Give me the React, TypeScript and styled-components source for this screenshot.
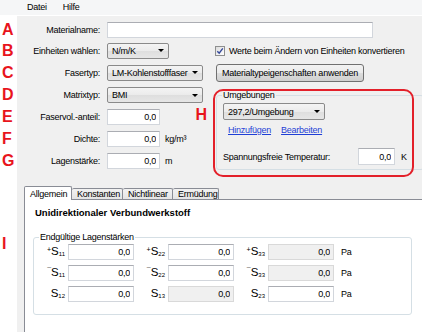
import React from "react"
import styled, { createGlobalStyle } from "styled-components"

const GlobalStyle = createGlobalStyle`
  html, body {
    margin: 0;
    padding: 0;
  }
  body {
    width: 422px;
    height: 332px;
    overflow: hidden;
    font-family: "Liberation Sans", Arial, sans-serif;
    font-size: 9px;
    letter-spacing: -0.25px;
    color: #000;
  }
`

const Window = styled.div`
  width: 422px;
  height: 332px;
  display: flex;
  flex-direction: column;
  overflow: hidden;
  background: linear-gradient(to right, #ffffff 0 17px, #f0f0f0 17px);
`

const MenuBar = styled.div`
  flex: none;
  height: 15px;
  display: flex;
  align-items: center;
  padding-left: 19px;
  background: #f5f6f7;
  border-bottom: 1px solid #ffffff;
`

const MenuItem = styled.span`
  padding: 0 8px;
  line-height: 15px;
`

const FormGrid = styled.div`
  flex: none;
  display: grid;
  grid-template-columns: 17px 83px 106px 1fr;
  grid-template-rows: 20px 21px 23px 22px 22px 22px 22px;
  padding-top: 4px;
`

const Marker = styled.div<{ $top?: number }>`
  padding-left: 2px;
  margin-top: ${(p) => p.$top ?? 0}px;
  align-self: ${(p) => (p.$top ? "start" : "center")};
  color: #e8141c;
  font-family: "Liberation Sans", Arial, sans-serif;
  font-weight: bold;
  font-size: 16px;
  line-height: 16px;
  letter-spacing: 0;
`

const Label = styled.div`
  align-self: center;
  text-align: right;
  white-space: nowrap;
`

const Field = styled.div<{ $span?: boolean }>`
  display: flex;
  align-items: center;
  padding-left: 7px;
  grid-column: ${(p) => (p.$span ? "3 / 5" : "auto")};
`

const Extra = styled.div<{ $indent: number }>`
  display: flex;
  align-items: center;
  padding-left: ${(p) => p.$indent}px;
`

const TextBox = styled.input<{ $w: number; $h?: number; $left?: boolean }>`
  box-sizing: border-box;
  width: ${(p) => p.$w}px;
  height: ${(p) => p.$h ?? 16}px;
  margin: 0;
  padding: 0 3px;
  border: 1px solid #d2d6dc;
  border-top-color: #abadb3;
  background: #ffffff;
  font: inherit;
  letter-spacing: inherit;
  color: #000;
  text-align: ${(p) => (p.$left ? "left" : "right")};
  outline: none;
  &:disabled {
    background: #f0f0f0;
    border-color: #d9d9d9;
    color: #000;
    -webkit-text-fill-color: #000;
  }
`

const Combo = styled.div<{ $w: number; $h?: number }>`
  box-sizing: border-box;
  width: ${(p) => p.$w}px;
  height: ${(p) => p.$h ?? 16}px;
  display: flex;
  align-items: center;
  padding-left: 4px;
  border: 1px solid #8a8a8a;
  border-radius: 2px;
  background: linear-gradient(#f4f4f4, #ebebeb 50%, #dedede 51%, #e6e6e6);
  white-space: nowrap;
`

const Arrow = styled.span`
  margin-left: auto;
  margin-right: 4px;
  width: 0;
  height: 0;
  border-left: 3px solid transparent;
  border-right: 3px solid transparent;
  border-top: 3px solid #000;
`

const PushButton = styled.div<{ $w: number }>`
  box-sizing: border-box;
  width: ${(p) => p.$w}px;
  height: 18px;
  display: flex;
  align-items: center;
  justify-content: center;
  border: 1px solid #707070;
  border-radius: 3px;
  background: linear-gradient(#f2f2f2, #ebebeb 50%, #dddddd 51%, #cfcfcf);
  white-space: nowrap;
`

const CheckRow = styled.label`
  display: flex;
  align-items: center;
  gap: 4px;
  white-space: nowrap;
`

const CheckBox = styled.span`
  box-sizing: border-box;
  width: 10px;
  height: 10px;
  display: flex;
  border: 1px solid #8e8f8f;
  background: linear-gradient(135deg, #dcdcdc, #ffffff);
`

const Unit = styled.span`
  margin-left: 5px;
  white-space: nowrap;
`

const HMarker = styled(Marker)`
  margin-left: auto;
  margin-right: -1px;
  margin-top: -4px;
  padding-left: 0;
`

const GroupBox = styled.div`
  position: relative;
  box-sizing: border-box;
  border: 1px solid #d5dfe5;
  border-radius: 3px;
`

const GroupTitle = styled.span<{ $bg: string }>`
  position: absolute;
  top: -6px;
  left: 5px;
  padding: 0 1px;
  line-height: 11px;
  background: ${(p) => p.$bg};
  white-space: nowrap;
`

const EnvBox = styled(GroupBox)`
  grid-column: 4;
  grid-row: 4 / span 4;
  margin: 11px -2px 2px 10px;
  padding: 7px 6px 4px 6px;
  display: flex;
  flex-direction: column;
`

const Highlight = styled.div`
  position: absolute;
  top: -7px;
  left: -4px;
  right: 9px;
  bottom: -8px;
  border: 2px solid #e3202a;
  border-radius: 10px;
  pointer-events: none;
`

const LinkRow = styled.div`
  display: flex;
  gap: 10px;
  height: 10px;
  margin-top: 5px;
  padding-left: 5px;
  align-items: center;
`

const Link = styled.a`
  color: #1f3fd6;
  text-decoration: underline;
  cursor: pointer;
`

const TempRow = styled.div`
  display: grid;
  grid-template-columns: 135px 37px auto;
  align-items: center;
  margin-top: 13px;
  height: 17px;
`

const TempUnit = styled.span`
  margin-left: 6px;
`

const TabArea = styled.div`
  flex: 1;
  min-height: 0;
  display: grid;
  grid-template-columns: 24px 1fr;
  padding-top: 14px;
`

const Gutter = styled.div`
  display: flex;
  flex-direction: column;
`

const TabColumn = styled.div`
  display: flex;
  flex-direction: column;
  min-height: 0;
`

const TabStrip = styled.div`
  flex: none;
  height: 13px;
  display: flex;
  align-items: flex-end;
`

const Tab = styled.div<{ $w: number; $active?: boolean }>`
  box-sizing: border-box;
  width: ${(p) => p.$w}px;
  height: ${(p) => (p.$active ? 14 : 11)}px;
  margin-bottom: ${(p) => (p.$active ? -1 : 0)}px;
  padding-left: 5px;
  display: flex;
  align-items: center;
  border: 1px solid #898c95;
  border-bottom: none;
  border-left-width: ${(p) => (p.$active ? 1 : 0)}px;
  border-radius: 2px 2px 0 0;
  background: ${(p) => (p.$active ? "#ffffff" : "linear-gradient(#f2f2f2, #e4e4e4)")};
  position: relative;
  z-index: ${(p) => (p.$active ? 1 : 0)};
  white-space: nowrap;
`

const Panel = styled.div`
  flex: 1;
  background: #ffffff;
  border-top: 1px solid #898c95;
  border-left: 1px solid #898c95;
`

const PanelTitle = styled.div`
  margin: 8px 0 0 10px;
  font-weight: bold;
  font-size: 9.5px;
  letter-spacing: 0;
  line-height: 10px;
`

const StressBox = styled(GroupBox)`
  width: 379px;
  margin: 19px 0 0 8px;
  padding: 6px 0 12px 2px;
  display: grid;
  grid-template-columns: 32px 66px 34px 66px 34px 66px auto;
  grid-template-rows: repeat(3, 16px);
  row-gap: 5px;
  align-items: center;
`

const Sym = styled.span`
  text-align: right;
  padding-right: 3px;
  font-size: 11.5px;
  line-height: 16px;
  letter-spacing: 0;
  white-space: nowrap;
`

const Pre = styled.span`
  font-size: 7px;
  vertical-align: 3px;
`

const Idx = styled.span`
  font-size: 6px;
  vertical-align: -1px;
`

const Pa = styled.span`
  padding-left: 7px;
`

const Check = () => (
  <CheckBox>
    <svg width="8" height="8" viewBox="0 0 8 8">
      <path d="M1.3 4.2 L3.2 6.2 L6.8 1.4" fill="none" stroke="#34489a" strokeWidth="1.4" />
    </svg>
  </CheckBox>
)

const Symbol = ({ pre, idx }: { pre?: string; idx: string }) => (
  <Sym>
    {pre && <Pre>{pre}</Pre>}S<Idx>{idx}</Idx>
  </Sym>
)

const rows: { pre?: string; idx: string; off?: boolean }[][] = [
  [{ pre: "+", idx: "11" }, { pre: "+", idx: "22" }, { pre: "+", idx: "33", off: true }],
  [{ pre: "¯", idx: "11" }, { pre: "¯", idx: "22" }, { pre: "¯", idx: "33", off: true }],
  [{ idx: "12" }, { idx: "13", off: true }, { idx: "23" }],
]

const tabs = [
  { name: "Allgemein", w: 48 },
  { name: "Konstanten", w: 51 },
  { name: "Nichtlinear", w: 50 },
  { name: "Ermüdung", w: 46 },
]

export default function App() {
  return (
    <Window>
      <GlobalStyle />
      <MenuBar>
        <MenuItem>Datei</MenuItem>
        <MenuItem>Hilfe</MenuItem>
      </MenuBar>

      <FormGrid>
        <Marker>A</Marker>
        <Label>Materialname:</Label>
        <Field $span>
          <TextBox $w={266} $left defaultValue="" />
        </Field>

        <Marker>B</Marker>
        <Label>Einheiten wählen:</Label>
        <Field>
          <Combo $w={62}>
            N/m/K
            <Arrow />
          </Combo>
        </Field>
        <Extra $indent={9}>
          <CheckRow>
            <Check />
            Werte beim Ändern von Einheiten konvertieren
          </CheckRow>
        </Extra>

        <Marker>C</Marker>
        <Label>Fasertyp:</Label>
        <Field>
          <Combo $w={96}>
            LM-Kohlenstofffaser
            <Arrow />
          </Combo>
        </Field>
        <Extra $indent={10}>
          <PushButton $w={148}>Materialtypeigenschaften anwenden</PushButton>
        </Extra>

        <EnvBox>
          <GroupTitle $bg="#f0f0f0">Umgebungen</GroupTitle>
          <Combo $w={102} $h={17}>
            297,2/Umgebung
            <Arrow />
          </Combo>
          <LinkRow>
            <Link>Hinzufügen</Link>
            <Link>Bearbeiten</Link>
          </LinkRow>
          <TempRow>
            <span>Spannungsfreie Temperatur:</span>
            <TextBox $w={37} $h={17} defaultValue="0,0" />
            <TempUnit>K</TempUnit>
          </TempRow>
          <Highlight />
        </EnvBox>

        <Marker>D</Marker>
        <Label>Matrixtyp:</Label>
        <Field>
          <Combo $w={96}>
            BMI
            <Arrow />
          </Combo>
        </Field>

        <Marker>E</Marker>
        <Label>Faservol.-anteil:</Label>
        <Field>
          <TextBox $w={53} defaultValue="0,0" />
          <HMarker as="span">H</HMarker>
        </Field>

        <Marker>F</Marker>
        <Label>Dichte:</Label>
        <Field>
          <TextBox $w={53} defaultValue="0,0" />
          <Unit>kg/m³</Unit>
        </Field>

        <Marker>G</Marker>
        <Label>Lagenstärke:</Label>
        <Field>
          <TextBox $w={53} defaultValue="0,0" />
          <Unit>m</Unit>
        </Field>
      </FormGrid>

      <TabArea>
        <Gutter>
          <Marker $top={50}>I</Marker>
        </Gutter>
        <TabColumn>
          <TabStrip>
            {tabs.map((t, i) => (
              <Tab key={t.name} $w={t.w} $active={i === 0}>
                {t.name}
              </Tab>
            ))}
          </TabStrip>
          <Panel>
            <PanelTitle>Unidirektionaler Verbundwerkstoff</PanelTitle>
            <StressBox>
              <GroupTitle $bg="#ffffff">Endgültige Lagenstärken</GroupTitle>
              {rows.map((row, r) => (
                <React.Fragment key={r}>
                  {row.map((c) => (
                    <React.Fragment key={c.idx + (c.pre ?? "")}>
                      <Symbol pre={c.pre} idx={c.idx} />
                      <TextBox $w={66} defaultValue="0,0" disabled={c.off} />
                    </React.Fragment>
                  ))}
                  <Pa>Pa</Pa>
                </React.Fragment>
              ))}
            </StressBox>
          </Panel>
        </TabColumn>
      </TabArea>
    </Window>
  )
}
